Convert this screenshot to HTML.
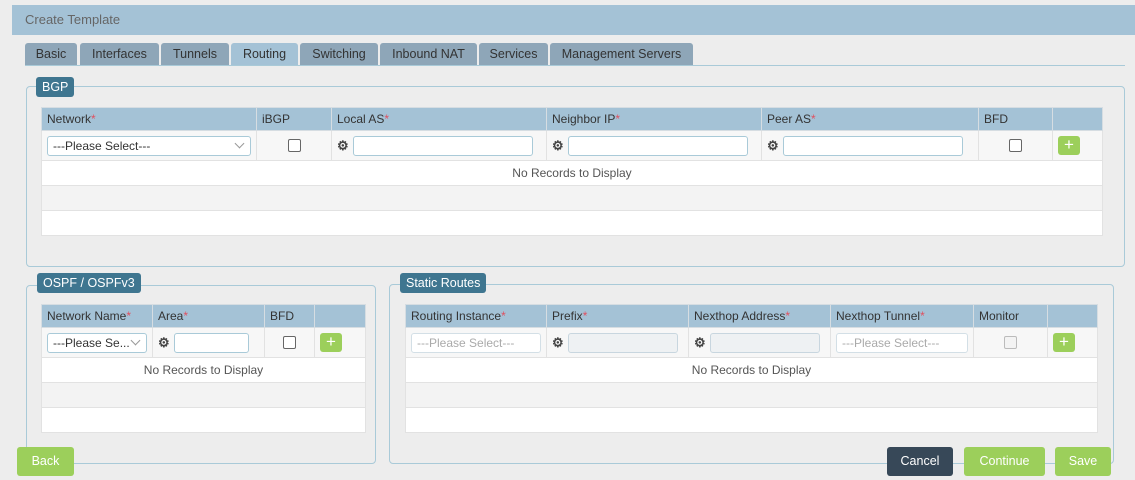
<!DOCTYPE html>
<html><head><meta charset="utf-8"><style>
*{box-sizing:border-box;margin:0;padding:0}
body{width:1135px;height:480px;background:#ededed;font-family:"Liberation Sans",sans-serif;font-size:12px;color:#333;position:relative;overflow:hidden}
.a{position:absolute}
.hdr{left:12px;top:5px;width:1123px;height:30px;background:#a4c2d6;color:#666;font-size:13px;padding:7px 0 0 13px}
.tab{position:absolute;top:43px;height:22px;background:#8ea6b8;color:#333;font-size:12.5px;text-align:center;line-height:22px;border-radius:3px 3px 0 0}
.tab.on{background:#a4c2d6}
.fs{position:absolute;border:1px solid #a9cad8;border-radius:4px}
.lg{position:absolute;background:#3f7690;color:#fff;font-size:12.5px;height:20px;line-height:20px;padding:0 6px;border-radius:3px}
table{position:absolute;border-collapse:collapse;background:#fff;table-layout:fixed}
th{background:#a4c2d6;font-weight:normal;text-align:left;padding:0 5px;height:23px;border:1px solid #d6dde2;color:#333}
td{border:1px solid #e2e2e2;height:25px}
tr.in td{background:#f7f7f7;height:30px;padding:0 5px}
tr.g td{background:#f3f3f3}
.r{color:#e05060}
.sel{height:20px;border:1px solid #a9cad8;border-radius:3px;background:#fff;padding:2px 5px;position:relative;white-space:nowrap;overflow:hidden}
.sel.ar:after{content:"";position:absolute;right:7px;top:3px;width:6px;height:6px;border-right:1px solid #999;border-bottom:1px solid #999;transform:rotate(45deg)}
.inp{height:20px;border:1px solid #a9cad8;border-radius:3px;background:#fff;display:inline-block;vertical-align:middle}
.dis{background:#eef1f3;border-color:#c8d6df}
.cb{width:13px;height:13px;border:1px solid #666;border-radius:2px;background:#fff;margin:0 auto}
.plus{width:22px;height:19px;background:#9ccf5b;border-radius:3px;color:#fff;font-size:17px;line-height:18px;text-align:center}
.gear{display:inline-block;vertical-align:middle;margin-right:4px;color:#444;font-size:13px;font-weight:bold}
.nr{text-align:center;color:#555}
.btn{position:absolute;top:447px;height:29px;line-height:29px;text-align:center;color:#fff;border-radius:3px;background:#9ccf5b;font-size:12.5px}
</style></head><body>
<div class="a hdr">Create Template</div>
<div class="tab" style="left:25px;width:52px">Basic</div>
<div class="tab" style="left:80px;width:79px">Interfaces</div>
<div class="tab" style="left:161px;width:68px">Tunnels</div>
<div class="tab on" style="left:231px;width:67px">Routing</div>
<div class="tab" style="left:300px;width:78px">Switching</div>
<div class="tab" style="left:380px;width:97px">Inbound NAT</div>
<div class="tab" style="left:479px;width:69px">Services</div>
<div class="tab" style="left:550px;width:143px">Management Servers</div>
<div class="a" style="left:25px;top:65px;width:1100px;height:1px;background:#a9cad8"></div>

<div class="fs" style="left:26px;top:86px;width:1099px;height:181px"></div>
<div class="lg" style="left:36px;top:77px">BGP</div>
<table style="left:41px;top:107px;width:1061px">
<colgroup><col style="width:215px"><col style="width:75px"><col style="width:215px"><col style="width:215px"><col style="width:217px"><col style="width:74px"><col style="width:50px"></colgroup>
<tr><th>Network<span class="r">*</span></th><th>iBGP</th><th>Local AS<span class="r">*</span></th><th>Neighbor IP<span class="r">*</span></th><th>Peer AS<span class="r">*</span></th><th>BFD</th><th></th></tr>
<tr class="in"><td><div class="sel ar">---Please Select---</div></td><td><div class="cb"></div></td><td><span class="gear">⚙</span><span class="inp" style="width:180px"></span></td><td><span class="gear">⚙</span><span class="inp" style="width:180px"></span></td><td><span class="gear">⚙</span><span class="inp" style="width:180px"></span></td><td><div class="cb"></div></td><td><div class="plus">+</div></td></tr>
<tr><td colspan="7" class="nr">No Records to Display</td></tr>
<tr class="g"><td colspan="7"></td></tr>
<tr><td colspan="7"></td></tr>
</table>

<div class="fs" style="left:26px;top:285px;width:350px;height:179px"></div>
<div class="lg" style="left:37px;top:273px">OSPF / OSPFv3</div>
<table style="left:41px;top:304px;width:324px">
<colgroup><col style="width:111px"><col style="width:112px"><col style="width:50px"><col style="width:51px"></colgroup>
<tr><th>Network Name<span class="r">*</span></th><th>Area<span class="r">*</span></th><th>BFD</th><th></th></tr>
<tr class="in"><td><div class="sel ar">---Please Se...</div></td><td><span class="gear">⚙</span><span class="inp" style="width:75px"></span></td><td><div class="cb"></div></td><td><div class="plus">+</div></td></tr>
<tr><td colspan="4" class="nr">No Records to Display</td></tr>
<tr class="g"><td colspan="4"></td></tr>
<tr><td colspan="4"></td></tr>
</table>

<div class="fs" style="left:389px;top:284px;width:725px;height:180px"></div>
<div class="lg" style="left:400px;top:273px">Static Routes</div>
<table style="left:405px;top:304px;width:692px">
<colgroup><col style="width:141px"><col style="width:142px"><col style="width:142px"><col style="width:143px"><col style="width:74px"><col style="width:50px"></colgroup>
<tr><th>Routing Instance<span class="r">*</span></th><th>Prefix<span class="r">*</span></th><th>Nexthop Address<span class="r">*</span></th><th>Nexthop Tunnel<span class="r">*</span></th><th>Monitor</th><th></th></tr>
<tr class="in"><td><div class="sel" style="color:#aaa;border-color:#d3dfe6">---Please Select---</div></td><td><span class="gear">⚙</span><span class="inp dis" style="width:110px"></span></td><td><span class="gear">⚙</span><span class="inp dis" style="width:110px"></span></td><td><div class="sel" style="color:#aaa;border-color:#d3dfe6">---Please Select---</div></td><td><div class="cb" style="border-color:#bbb;background:#f3f3f3"></div></td><td><div class="plus">+</div></td></tr>
<tr><td colspan="6" class="nr">No Records to Display</td></tr>
<tr class="g"><td colspan="6"></td></tr>
<tr><td colspan="6"></td></tr>
</table>

<div class="btn" style="left:17px;width:57px">Back</div>
<div class="btn" style="left:887px;width:66px;background:#374858">Cancel</div>
<div class="btn" style="left:964px;width:81px">Continue</div>
<div class="btn" style="left:1055px;width:56px">Save</div>
</body></html>
